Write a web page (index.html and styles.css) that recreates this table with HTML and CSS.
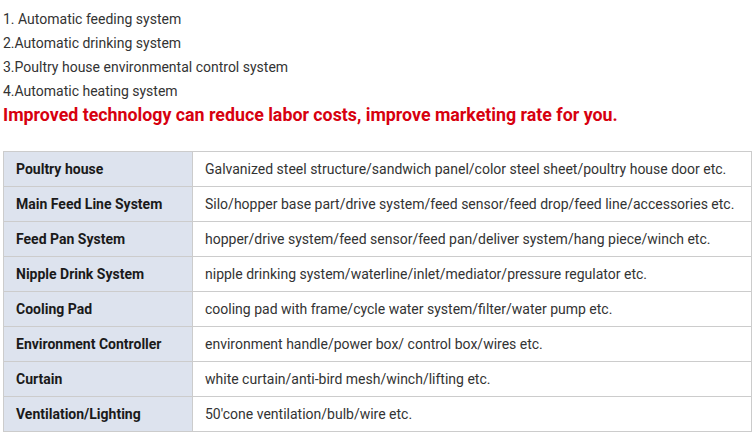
FILE: index.html
```html
<!DOCTYPE html>
<html>
<head>
<meta charset="utf-8">
<link rel="stylesheet" href="styles.css">
</head>
<body>
<div class="intro">
  <p class="item">1. Automatic feeding system</p>
  <p class="item">2.Automatic drinking system</p>
  <p class="item">3.Poultry house environmental control system</p>
  <p class="item">4.Automatic heating system</p>
  <p class="lead">Improved technology can reduce labor costs, improve marketing rate for you.</p>
</div>
<table class="spec">
  <tr><th>Poultry house</th><td>Galvanized steel structure/sandwich panel/color steel sheet/poultry house door etc.</td></tr>
  <tr><th>Main Feed Line System</th><td>Silo/hopper base part/drive system/feed sensor/feed drop/feed line/accessories etc.</td></tr>
  <tr><th>Feed Pan System</th><td>hopper/drive system/feed sensor/feed pan/deliver system/hang piece/winch etc.</td></tr>
  <tr><th>Nipple Drink System</th><td>nipple drinking system/waterline/inlet/mediator/pressure regulator etc.</td></tr>
  <tr><th>Cooling Pad</th><td>cooling pad with frame/cycle water system/filter/water pump etc.</td></tr>
  <tr><th>Environment Controller</th><td>environment handle/power box/ control box/wires etc.</td></tr>
  <tr><th>Curtain</th><td>white curtain/anti-bird mesh/winch/lifting etc.</td></tr>
  <tr><th>Ventilation/Lighting</th><td>50'cone ventilation/bulb/wire etc.</td></tr>
</table>
</body>
</html>
```
FILE: styles.css
```css
html, body {
  margin: 0;
  background: #ffffff;
}
body {
  padding: 7px 4px 0 3px;
  font-family: Roboto, "Liberation Sans", sans-serif;
  color: #333333;
}
.intro p {
  margin: 0;
}
.item {
  font-size: 14px;
  line-height: 24px;
}
.lead {
  font-size: 17.8px;
  font-weight: bold;
  line-height: 24px;
  color: #d7000f;
}
.spec {
  margin-top: 24px;
  width: 100%;
  border-collapse: collapse;
  font-size: 14px;
}
.spec th, .spec td {
  border: 1px solid #cccccc;
  height: 34px;
  padding: 0 12px;
  text-align: left;
  vertical-align: middle;
}
.spec th {
  width: 164px;
  background: #dde3ee;
  font-weight: bold;
  color: #1a1a1a;
}
.spec td {
  color: #333333;
}
```
